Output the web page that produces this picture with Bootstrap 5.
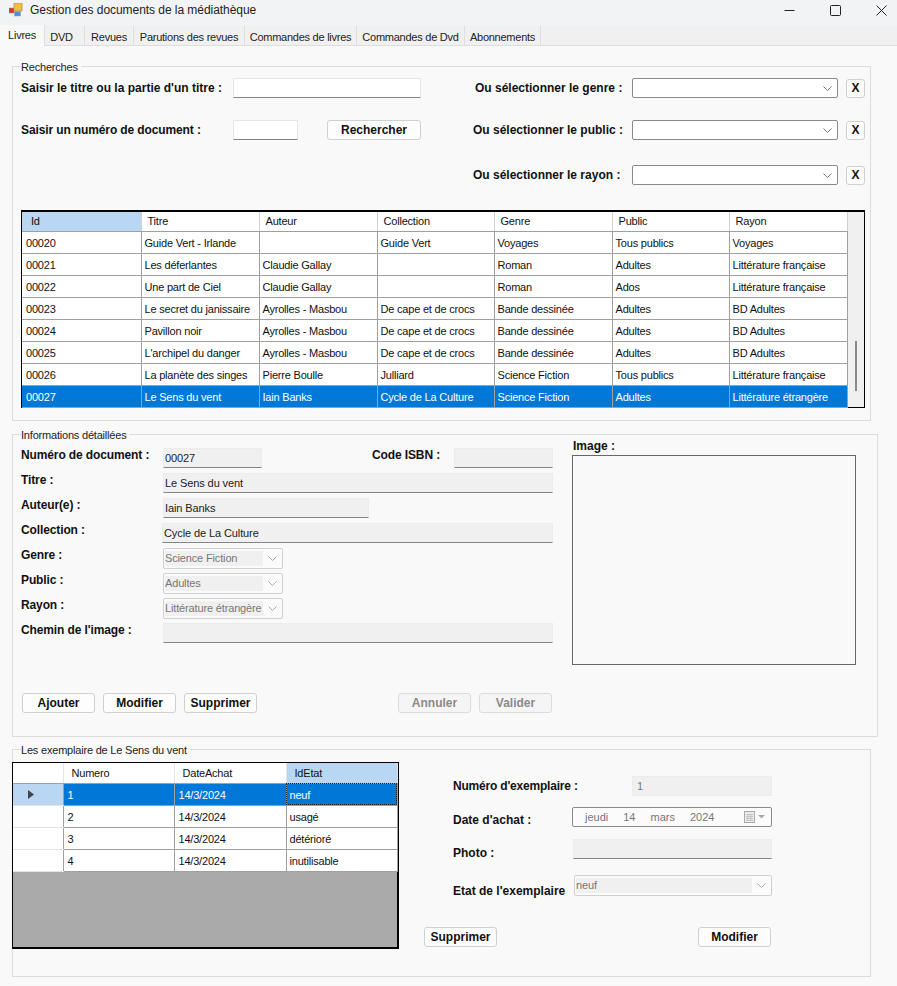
<!DOCTYPE html>
<html lang="fr">
<head>
  <meta charset="UTF-8" />
  <title>Gestion des documents de la médiathèque</title>
  <link href="https://cdn.jsdelivr.net/npm/bootstrap@5.3.2/dist/css/bootstrap.min.css" rel="stylesheet" />
  <style>
    html, body { height: 986px; overflow: hidden; }
    body { background: #f9f9f9; color: #111; font-family: "Liberation Sans", Arial, sans-serif; font-size: 11px; line-height: 1; }

    .titlebar { height: 26px; background: #f2f3f5; font-size: 12px; padding: 0 0 6px 9px; color: #222; letter-spacing: -.05px; }
    .titlebar .app-ico { margin-right: 7px; }
    .win-ctrls { margin-right: -7px; }
    .win-btn { width: 46px; height: 20px; }
    .tabstrip { height: 20px; background: #f0f0f0; border-bottom: 1px solid #dedede; }
    .tab-item { height: 19px; line-height: 22px; text-align: center; white-space: nowrap; border-right: 1px solid #dedede; color: #222; font-size: 11px; letter-spacing: -.25px; }
    .tab-item.current { background: #f9f9f9; height: 21px; margin-top: -1px; line-height: 20px; }
    .tab-dvd { padding-right: 6px; }

    .gbox { position: relative; border: 1px solid #dcdcdc; margin-left: 12px; }
    .gbox-title { position: absolute; left: 8px; top: -6px; background: #f9f9f9; padding-right: 3px; color: #222; font-size: 11px; line-height: 12px; letter-spacing: -.2px; }
    .gb-search { width: 859px; height: 355px; margin-top: 20px; padding: 11px 5px 0 8px; }
    .gb-detail { width: 866px; height: 303px; margin-top: 13px; padding: 13px 0 0 8px; }
    .gb-copies { width: 859px; height: 228px; margin-top: 12px; padding: 12px 0 0 0; }

    .lbl { font-weight: 700; color: #111; white-space: nowrap; font-size: 12px; }
    .lbl-tight { letter-spacing: -.12px; }
    .lbl-tighter { letter-spacing: -.2px; }
    .win-input { height: 20px; background: #fff; border: 1px solid #e6e6e6; border-bottom-color: #858585; padding: 0 1px; line-height: 18px; font-size: 11px; letter-spacing: -.1px; }
    .win-input.off { background: #f0f0f0; border-color: #ececec; border-bottom-color: #858585; color: #222; }
    .win-btn-push { height: 20px; width: 73px; padding: 0; background: #fdfdfd; border: 1px solid #d0d0d0; border-radius: 3px; font: 700 12px "Liberation Sans", Arial, sans-serif; color: #111; }
    .win-btn-push.off { background: #f5f5f5; color: #8a8a8a; border-color: #dcdcdc; }
    .win-combo { height: 20px; background: #fff; border: 1px solid #8a8a8a; border-radius: 2px; padding-right: 5px; }
    .win-combo.off { background: #fbfbfb; border-color: #d0d0d0; height: 21px; padding: 2px 5px 2px 1px; color: #777; }
    .combo-text { background: #f0f0f0; height: 15px; line-height: 15px; flex: 1 1 0; min-width: 0; margin-right: 5px; white-space: nowrap; overflow: hidden; letter-spacing: -.15px; }
    .x-btn { width: 19px; height: 19px; padding: 0; margin-left: 8px; font-size: 12px; }

    .row-a { height: 20px; margin-bottom: 22px; }
    .row-b { height: 20px; margin-bottom: 25px; }
    .row-c { height: 20px; }
    .right-part { width: 392px; margin-left: auto; }
    .right-part .lbl { width: 159px; }
    .lbl-genre { padding-left: 2px; }

    .grid-wrap { margin: 25px 0 0 0; width: 844px; height: 198px; border: 1px solid #000; border-width: 2px 1px 1px 1px; background: #f0f0f0; position: relative; }
    .grid-tbl { table-layout: fixed; border-collapse: collapse; background: #fff; }
    .grid-tbl th, .grid-tbl td { border-right: 1px solid #a0a0a0; border-bottom: 1px solid #a0a0a0; font-weight: 400; white-space: nowrap; overflow: hidden; padding: 0 0 0 3px; font-size: 11px; letter-spacing: -.2px; color: #111; }
    .grid-tbl th { height: 19px; padding-left: 6px; border-bottom-color: #a0a0a0; border-right-color: #d0d0d0; }
    .grid-tbl td { height: 22px; padding-top: 2px; }
    .grid-tbl th.picked { background: #b9d7f2; }
    .grid-tbl tr.picked td { background: #0078d7; color: #fff; }
    .main-tbl { width: 825px; }
    .main-tbl td:first-child { padding-left: 4px; }
    .main-tbl th:first-child { padding-left: 9px; }
    .scroll-thumb { position: absolute; right: 7px; top: 129px; width: 2px; height: 50px; background: #8a8a8a; }

    .detail-left { width: 535px; }
    .d-row { height: 25px; }
    .d-row .lbl { width: 142px; padding-top: 1px; letter-spacing: -.12px; }
    .actions { margin: 45px 0 0 1px; }
    .gap-push { margin-left: 8px; }
    .d-img { margin: -8px 0 0 17px; }
    .img-box { width: 284px; height: 210px; border: 1px solid #666; background: #f9f9f9; margin: 3px 0 0 -1px; }

    .copy-wrap { width: 387px; height: 187px; border: 1px solid #000; border-width: 1px 2px 2px 1px; background: #aaa; margin: 0 54px 0 -1px; }
    .copy-tbl { width: 384px; background: #fff; }
    .copy-tbl th { height: 20px; border-right-color: #e4e4e4; padding: 2px 0 0 8px; }
    .copy-tbl td { padding-left: 4px; }
    .copy-tbl td:last-child { padding-left: 3px; }
    .copy-tbl th:first-child, .copy-tbl td:first-child { padding: 0; }
    .copy-tbl tr td:first-child { border-bottom-color: #e4e4e4; }
    .copy-tbl tr.picked td:first-child { background: #b9d7f2; }
    .copy-tbl tr.picked td:last-child { outline: 1px dotted #222; outline-offset: -1px; }
    .row-marker { margin-left: -14px; }
    .copy-right { width: 360px; }
    .c-row { height: 20px; }
    .c-row > .lbl.low-3 { padding-top: 6px; }
    .c-row > .lbl.low-4 { padding-top: 8px; }
    .c-row > .lbl.low-5 { padding-top: 10px; }
    .c-gap { margin-right: 41px; }
    .input-flat { width: 140px; border-bottom-color: #ececec !important; color: #777 !important; padding-left: 4px; }
    .date-pick { width: 200px; height: 20px; border: 1px solid #8a8a8a; border-radius: 2px; background: #fbfbfb; color: #777; padding: 0 6px 0 12px; }
    .date-pick span { margin-right: 15px; }
    .copy-actions { margin: 31px 0 0 -29px; }
  </style>
</head>
<body>

  <div class="titlebar d-flex align-items-center">
    <svg class="app-ico" width="14" height="14" viewBox="0 0 14 14"><rect x="0" y="5" width="5" height="5" fill="#d8352a" stroke="#999" stroke-width=".5"/><rect x="5" y="0" width="8" height="8" fill="#f4bf3c" stroke="#a88a4a" stroke-width=".7"/><rect x="5.5" y="8.5" width="6" height="4.5" fill="#4f8fe0" stroke="#999" stroke-width=".5"/></svg>
    <span>Gestion des documents de la médiathèque</span>
    <div class="win-ctrls ms-auto d-flex">
      <div class="win-btn d-flex align-items-center justify-content-center"><svg width="11" height="11" viewBox="0 0 11 11"><path d="M.5 5.5h10" stroke="#222"/></svg></div>
      <div class="win-btn d-flex align-items-center justify-content-center"><svg width="11" height="11" viewBox="0 0 11 11"><rect x=".5" y=".5" width="10" height="10" rx="1" fill="none" stroke="#222"/></svg></div>
      <div class="win-btn d-flex align-items-center justify-content-center"><svg width="11" height="11" viewBox="0 0 11 11"><path d="M.5.5l10 10M10.5.5l-10 10" stroke="#222"/></svg></div>
    </div>
  </div>

  <div class="tabstrip d-flex">
    <div class="tab-item current" style="width:45px">Livres</div>
    <div class="tab-item tab-dvd" style="width:40px">DVD</div>
    <div class="tab-item" style="width:49px">Revues</div>
    <div class="tab-item" style="width:111px">Parutions des revues</div>
    <div class="tab-item" style="width:112px">Commandes de livres</div>
    <div class="tab-item" style="width:108px">Commandes de Dvd</div>
    <div class="tab-item" style="width:76px">Abonnements</div>
  </div>

  <div class="gbox gb-search">
    <span class="gbox-title">Recherches</span>
    <div class="d-flex align-items-center row-a">
      <span class="lbl" style="width:212px">Saisir le titre ou la partie d'un titre :</span>
      <div class="win-input" style="width:188px"></div>
      <div class="right-part d-flex align-items-center">
        <span class="lbl lbl-genre">Ou sélectionner le genre :</span>
        <div class="win-combo d-flex align-items-center justify-content-end flex-grow-1"><svg width="9" height="5" viewBox="0 0 9 5"><path d="M.5.5l4 4 4-4" fill="none" stroke="#777"/></svg></div>
        <button class="win-btn-push x-btn">X</button>
      </div>
    </div>
    <div class="d-flex align-items-center row-b">
      <span class="lbl lbl-tight" style="width:212px">Saisir un numéro de document :</span>
      <div class="win-input" style="width:65px"></div>
      <button class="win-btn-push" style="width:94px;margin-left:29px">Rechercher</button>
      <div class="right-part d-flex align-items-center">
        <span class="lbl">Ou sélectionner le public :</span>
        <div class="win-combo d-flex align-items-center justify-content-end flex-grow-1"><svg width="9" height="5" viewBox="0 0 9 5"><path d="M.5.5l4 4 4-4" fill="none" stroke="#777"/></svg></div>
        <button class="win-btn-push x-btn">X</button>
      </div>
    </div>
    <div class="d-flex align-items-center row-c">
      <div class="right-part d-flex align-items-center">
        <span class="lbl">Ou sélectionner le rayon :</span>
        <div class="win-combo d-flex align-items-center justify-content-end flex-grow-1"><svg width="9" height="5" viewBox="0 0 9 5"><path d="M.5.5l4 4 4-4" fill="none" stroke="#777"/></svg></div>
        <button class="win-btn-push x-btn">X</button>
      </div>
    </div>

    <div class="grid-wrap">
      <table class="grid-tbl main-tbl">
        <colgroup><col style="width:119px"><col style="width:118px"><col style="width:118px"><col style="width:117px"><col style="width:118px"><col style="width:117px"><col style="width:118px"></colgroup>
        <thead><tr><th class="picked">Id</th><th>Titre</th><th>Auteur</th><th>Collection</th><th>Genre</th><th>Public</th><th>Rayon</th></tr></thead>
        <tbody>
          <tr><td>00020</td><td>Guide Vert - Irlande</td><td></td><td>Guide Vert</td><td>Voyages</td><td>Tous publics</td><td>Voyages</td></tr>
          <tr><td>00021</td><td>Les déferlantes</td><td>Claudie Gallay</td><td></td><td>Roman</td><td>Adultes</td><td>Littérature française</td></tr>
          <tr><td>00022</td><td>Une part de Ciel</td><td>Claudie Gallay</td><td></td><td>Roman</td><td>Ados</td><td>Littérature française</td></tr>
          <tr><td>00023</td><td>Le secret du janissaire</td><td>Ayrolles - Masbou</td><td>De cape et de crocs</td><td>Bande dessinée</td><td>Adultes</td><td>BD Adultes</td></tr>
          <tr><td>00024</td><td>Pavillon noir</td><td>Ayrolles - Masbou</td><td>De cape et de crocs</td><td>Bande dessinée</td><td>Adultes</td><td>BD Adultes</td></tr>
          <tr><td>00025</td><td>L'archipel du danger</td><td>Ayrolles - Masbou</td><td>De cape et de crocs</td><td>Bande dessinée</td><td>Adultes</td><td>BD Adultes</td></tr>
          <tr><td>00026</td><td>La planète des singes</td><td>Pierre Boulle</td><td>Julliard</td><td>Science Fiction</td><td>Tous publics</td><td>Littérature française</td></tr>
          <tr class="picked"><td>00027</td><td>Le Sens du vent</td><td>Iain Banks</td><td>Cycle de La Culture</td><td>Science Fiction</td><td>Adultes</td><td>Littérature étrangère</td></tr>
        </tbody>
      </table>
      <div class="scroll-thumb"></div>
    </div>
  </div>

  <div class="gbox gb-detail d-flex">
    <span class="gbox-title">Informations détaillées</span>
    <div class="detail-left">
      <div class="d-row d-flex">
        <span class="lbl">Numéro de document :</span>
        <div class="win-input off" style="width:99px">00027</div>
        <span class="lbl" style="width:auto;margin-left:110px">Code ISBN :</span>
        <div class="win-input off ms-auto" style="width:99px;margin-right:3px"></div>
      </div>
      <div class="d-row d-flex"><span class="lbl">Titre :</span><div class="win-input off" style="width:390px">Le Sens du vent</div></div>
      <div class="d-row d-flex"><span class="lbl">Auteur(e) :</span><div class="win-input off" style="width:206px">Iain Banks</div></div>
      <div class="d-row d-flex"><span class="lbl">Collection :</span><div class="win-input off" style="width:391px;margin-left:-1px">Cycle de La Culture</div></div>
      <div class="d-row d-flex">
        <span class="lbl">Genre :</span>
        <div class="win-combo off d-flex align-items-center" style="width:120px"><span class="combo-text">Science Fiction</span><svg width="9" height="5" viewBox="0 0 9 5"><path d="M.5.5l4 4 4-4" fill="none" stroke="#aaa"/></svg></div>
      </div>
      <div class="d-row d-flex">
        <span class="lbl">Public :</span>
        <div class="win-combo off d-flex align-items-center" style="width:120px"><span class="combo-text">Adultes</span><svg width="9" height="5" viewBox="0 0 9 5"><path d="M.5.5l4 4 4-4" fill="none" stroke="#aaa"/></svg></div>
      </div>
      <div class="d-row d-flex">
        <span class="lbl">Rayon :</span>
        <div class="win-combo off d-flex align-items-center" style="width:120px"><span class="combo-text">Littérature étrangère</span><svg width="9" height="5" viewBox="0 0 9 5"><path d="M.5.5l4 4 4-4" fill="none" stroke="#aaa"/></svg></div>
      </div>
      <div class="d-row d-flex"><span class="lbl">Chemin de l'image :</span><div class="win-input off" style="width:390px"></div></div>
      <div class="actions d-flex">
        <button class="win-btn-push">Ajouter</button>
        <button class="win-btn-push gap-push">Modifier</button>
        <button class="win-btn-push gap-push">Supprimer</button>
        <button class="win-btn-push off" style="margin-left:141px">Annuler</button>
        <button class="win-btn-push off gap-push">Valider</button>
      </div>
    </div>
    <div class="d-img">
      <span class="lbl">Image :</span>
      <div class="img-box"></div>
    </div>
  </div>

  <div class="gbox gb-copies d-flex">
    <span class="gbox-title">Les exemplaire de Le Sens du vent</span>
    <div class="copy-wrap flex-shrink-0">
      <table class="grid-tbl copy-tbl">
        <colgroup><col style="width:50px"><col style="width:111px"><col style="width:112px"><col style="width:111px"></colgroup>
        <thead><tr><th></th><th>Numero</th><th>DateAchat</th><th class="picked">IdEtat</th></tr></thead>
        <tbody>
          <tr class="picked"><td class="text-center"><svg class="row-marker" width="6" height="9" viewBox="0 0 6 9"><path d="M0 0l6 4.5-6 4.5z" fill="#444"/></svg></td><td>1</td><td>14/3/2024</td><td>neuf</td></tr>
          <tr><td></td><td>2</td><td>14/3/2024</td><td>usagé</td></tr>
          <tr><td></td><td>3</td><td>14/3/2024</td><td>détérioré</td></tr>
          <tr><td></td><td>4</td><td>14/3/2024</td><td>inutilisable</td></tr>
        </tbody>
      </table>
    </div>
    <div class="copy-right">
      <div class="c-row d-flex align-items-center" style="margin-top:14px">
        <span class="lbl lbl-tighter">Numéro d'exemplaire :</span>
        <div class="win-input off input-flat ms-auto c-gap">1</div>
      </div>
      <div class="c-row d-flex align-items-center" style="margin-top:11px">
        <span class="lbl low-3">Date d'achat :</span>
        <div class="date-pick d-flex align-items-center ms-auto c-gap">
          <span>jeudi</span><span>14</span><span>mars</span><span>2024</span>
          <svg class="ms-auto" width="21" height="12" viewBox="0 0 21 12"><rect x=".5" y=".5" width="10" height="11" fill="#ececec" stroke="#aaa"/><path d="M2 3.5h7M2 5.5h7M2 7.5h7M2 9.5h7M4 3v7M7 3v7" stroke="#c4c4c4"/><path d="M14 4h7l-3.5 3.5z" fill="#aaa"/></svg>
        </div>
      </div>
      <div class="c-row d-flex align-items-center" style="margin-top:12px">
        <span class="lbl low-4">Photo :</span>
        <div class="win-input off ms-auto c-gap" style="width:199px"></div>
      </div>
      <div class="c-row d-flex align-items-center" style="margin-top:16px;height:21px">
        <span class="lbl low-5">Etat de l'exemplaire</span>
        <div class="win-combo off d-flex align-items-center ms-auto c-gap" style="width:198px"><span class="combo-text">neuf</span><svg width="9" height="5" viewBox="0 0 9 5"><path d="M.5.5l4 4 4-4" fill="none" stroke="#aaa"/></svg></div>
      </div>
      <div class="copy-actions d-flex">
        <button class="win-btn-push">Supprimer</button>
        <button class="win-btn-push" style="margin-left:201px">Modifier</button>
      </div>
    </div>
  </div>

  <script src="https://cdn.jsdelivr.net/npm/bootstrap@5.3.2/dist/js/bootstrap.bundle.min.js"></script>
</body>
</html>
